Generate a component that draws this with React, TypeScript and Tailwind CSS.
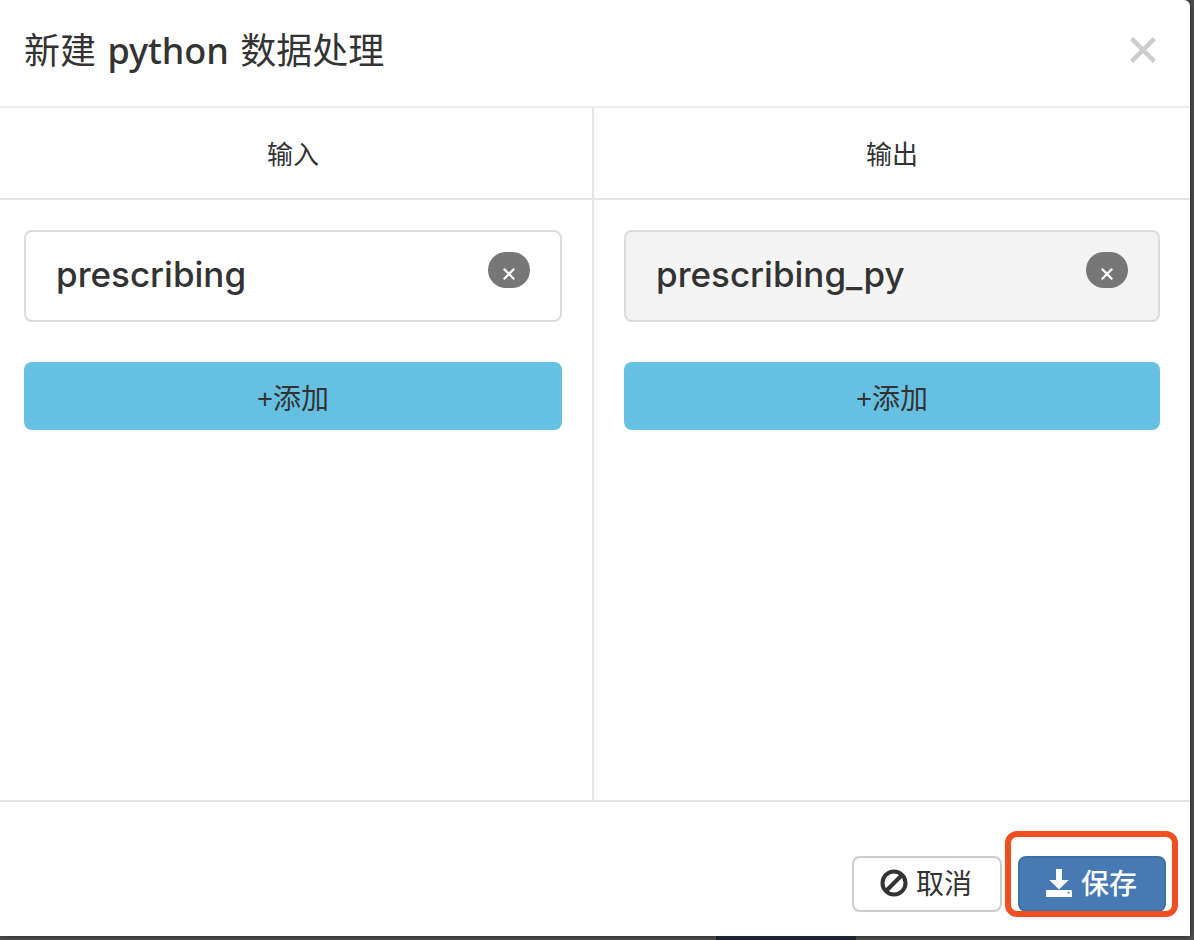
import React from "react";

function CrossIcon({ className, width }: { className: string; width: number }) {
  return (
    <svg viewBox="0 0 24 24" className={className} fill="none" stroke="currentColor" strokeWidth={width} aria-hidden="true">
      <path d="M1.5 1.5 22.5 22.5M22.5 1.5 1.5 22.5" />
    </svg>
  );
}

function BanIcon() {
  return (
    <svg viewBox="0 0 28 28" className="size-7 shrink-0" fill="none" stroke="currentColor" strokeWidth="4" aria-hidden="true">
      <circle cx="14" cy="14" r="11.5" />
      <path d="M6 22 22 6" />
    </svg>
  );
}

function SaveIcon() {
  return (
    <svg viewBox="0 0 28 28" className="size-7 shrink-0" fill="currentColor" aria-hidden="true">
      <path d="M11 0h6v11h6.700L14 20.500 4.300 11H11z" />
      <path fillRule="evenodd" d="M2 21h24a1 1 0 0 1 1 1v6H1v-6a1 1 0 0 1 1-1zm20.500 2v1.500h2V23z" />
    </svg>
  );
}

interface ColumnProps {
  title: string;
  item: string;
  side: string;
  card: string;
}

function Column({ title, item, side, card }: ColumnProps) {
  return (
    <section className={"flex flex-col " + side}>
      <h2 className="flex h-[92px] items-center justify-center border-b-2 border-[#e5e5e5] pt-0.5 pr-[30px] pl-[var(--pad)] text-[26px] leading-9">
        {title}
      </h2>
      <div className="flex flex-col gap-10 pt-[30px] pr-[30px] pl-[var(--pad)]">
        <div className={"flex h-[92px] items-start justify-between rounded-lg border-2 border-[#dcdcdc] px-[30px] pt-5 " + card}>
          <span className="font-[Inter,'Noto_Sans_CJK_SC',sans-serif] text-[35px] leading-[44px] font-medium">{item}</span>
          <button type="button" aria-label={"移除 " + item} className="flex h-9 w-[42px] items-center justify-center rounded-[18px] bg-[#777] pt-2 text-white">
            <CrossIcon className="size-3" width={4.5} />
          </button>
        </div>
        <button type="button" className="flex h-[68px] items-center justify-center rounded-lg bg-[#66c0e1] pt-1 text-[28px] leading-10">
          +添加
        </button>
      </div>
    </section>
  );
}

export default function App() {
  return (
    <div className="flex min-h-screen flex-col bg-[#4f4e4e] font-['Noto_Sans','Noto_Sans_CJK_SC',sans-serif] text-[#333]">
      <div role="dialog" aria-labelledby="dialog-title" className="mr-1 flex flex-1 flex-col rounded-tr-md bg-white shadow-[0_0_6px_rgba(0,0,0,0.5)]">
        <header className="flex h-[108px] items-start justify-between border-b-2 border-[#ededed] pt-[25px] pr-[34px] pl-6">
          <h1 id="dialog-title" className="text-[36px] leading-[52px]">
            新建 <span className="mx-0.5 font-medium">python</span> 数据处理
          </h1>
          <button type="button" aria-label="关闭" className="mt-3 text-[#ccc]">
            <CrossIcon className="size-[26px]" width={4} />
          </button>
        </header>
        <main className="grid flex-1 grid-cols-[594fr_596fr]">
          <Column title="输入" item="prescribing" side="border-r-2 border-[#e5e5e5] [--pad:24px]" card="bg-white" />
          <Column title="输出" item="prescribing_py" side="[--pad:30px]" card="bg-[#f4f4f4]" />
        </main>
        <footer className="flex justify-end gap-4 border-t-2 border-[#e5e5e5] px-6 pt-[54px] pb-6">
          <button type="button" className="flex h-14 w-[150px] items-center justify-center gap-2 rounded-lg border-2 border-[#ccc] bg-white pr-0.5 pb-[3px] text-[28px] leading-10">
            <BanIcon />
            取消
          </button>
          <div className="relative">
            <button type="button" className="flex h-14 w-[148px] items-center justify-center gap-2 rounded-lg border-2 border-[#3f6fa5] bg-[#477ab3] pr-0.5 pb-[3px] text-[28px] leading-10 font-medium text-white">
              <SaveIcon />
              保存
            </button>
            <div className="pointer-events-none absolute -top-[25px] -right-3 -bottom-[5px] -left-[13px] rounded-xl border-6 border-[#f04e23]" />
          </div>
        </footer>
      </div>
      <div className="flex h-1">
        <div className="w-3/5" />
        <div className="w-[140px] bg-[#1b2532]" />
      </div>
    </div>
  );
}
